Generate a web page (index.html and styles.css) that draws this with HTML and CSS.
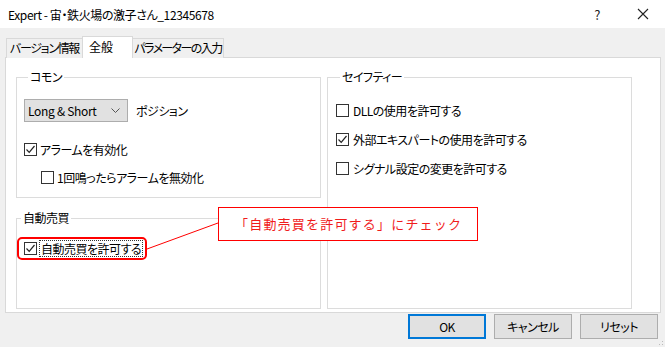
FILE: index.html
```html
<!DOCTYPE html>
<html lang="ja">
<head>
    <meta charset="UTF-8">
    <title>Expert</title>
    <link rel="stylesheet" href="styles.css">
</head>
<body>
    <div class="window">
        <!-- Title bar -->
        <div class="titlebar">
            <span class="title">Expert - 宙・鉄火場の激子さん_12345678</span>
            <span class="help">?</span>
            <svg class="close" width="12" height="12" viewBox="0 0 12 12">
                <path d="M1 1 L11 11 M11 1 L1 11" stroke="#222" stroke-width="1.1" fill="none"/>
            </svg>
        </div>

        <!-- Tabs -->
        <div class="tabs">
            <div class="tab info">バージョン情報</div>
            <div class="tab active">全般</div>
            <div class="tab params">パラメーターの入力</div>
        </div>

        <div class="panel">
            <div class="col">
                <fieldset class="group common">
                    <legend>コモン</legend>
                    <div class="select-row">
                        <div class="select">
                            <span>Long &amp; Short</span>
                            <svg width="9" height="6" viewBox="0 0 9 6"><path d="M0.5 0.5 L4.5 4.5 L8.5 0.5" stroke="#555" fill="none"/></svg>
                        </div>
                        <span>ポジション</span>
                    </div>
                    <div class="check first">
                        <span class="box"><svg width="11" height="11" viewBox="0 0 11 11"><path d="M1.5 5.5 L4.2 8.3 L9.5 2" stroke="#222" stroke-width="1.2" fill="none"/></svg></span>
                        <span>アラームを有効化</span>
                    </div>
                    <div class="check nested">
                        <span class="box"></span>
                        <span>1回鳴ったらアラームを無効化</span>
                    </div>
                </fieldset>

                <fieldset class="group auto">
                    <legend>自動売買</legend>
                    <div class="mark">
                        <span class="box"><svg width="11" height="11" viewBox="0 0 11 11"><path d="M1.5 5.5 L4.2 8.3 L9.5 2" stroke="#222" stroke-width="1.2" fill="none"/></svg></span>
                        <span class="focus">自動売買を許可する</span>
                    </div>
                </fieldset>
            </div>

            <div class="col">
                <fieldset class="group safety">
                    <legend>セイフティー</legend>
                    <div class="check">
                        <span class="box"></span>
                        <span>DLLの使用を許可する</span>
                    </div>
                    <div class="check">
                        <span class="box"><svg width="11" height="11" viewBox="0 0 11 11"><path d="M1.5 5.5 L4.2 8.3 L9.5 2" stroke="#222" stroke-width="1.2" fill="none"/></svg></span>
                        <span>外部エキスパートの使用を許可する</span>
                    </div>
                    <div class="check">
                        <span class="box"></span>
                        <span>シグナル設定の変更を許可する</span>
                    </div>
                </fieldset>
            </div>
        </div>

        <div class="buttons">
            <button class="btn default">OK</button>
            <button class="btn">キャンセル</button>
            <button class="btn">リセット</button>
            <svg class="grip" width="5" height="5" viewBox="0 0 5 5">
                <rect x="3" y="0" width="1" height="1" fill="#bbb"/>
                <rect x="0" y="3" width="1" height="1" fill="#bbb"/>
                <rect x="3" y="3" width="1" height="1" fill="#bbb"/>
            </svg>
        </div>

        <!-- Annotation -->
        <svg class="leader" width="665" height="347">
            <line x1="147" y1="249" x2="218" y2="223" stroke="#ff0000" stroke-width="1"/>
        </svg>
        <div class="callout">「自動売買を許可する」にチェック</div>
    </div>
</body>
</html>
```

FILE: styles.css
```css
/* Basic Styles */
* {
    box-sizing: border-box;
}

body {
    margin: 0;
    font-family: "Noto Sans CJK JP", "Noto Sans", sans-serif;
    font-size: 12px;
    font-feature-settings: "palt";
    letter-spacing: -0.5px;
    color: #000;
    background-color: #f0f0f0;
}

.window {
    position: relative;
    width: 665px;
    height: 347px;
    overflow: hidden;
}

/* Title bar */
.titlebar {
    height: 28px;
    background-color: #fff;
    display: flex;
    align-items: center;
    padding-left: 8px;
}

.title {
    flex: 1;
    letter-spacing: -0.4px;
}

.help {
    font-size: 13px;
    color: #222;
    margin-right: 37px;
}

.close {
    margin-right: 16px;
}

/* Tabs */
.tabs {
    display: flex;
    align-items: flex-end;
    margin-top: 8px;
    padding-left: 6px;
    margin-bottom: -1px;
    position: relative;
    z-index: 1;
}

.tab {
    height: 20px;
    line-height: 18px;
    border: 1px solid #d9d9d9;
    border-bottom: none;
    background-color: #f0f0f0;
    text-align: center;
    white-space: nowrap;
    letter-spacing: -1.3px;
}

.tab.info {
    width: 77px;
}

.tab.params {
    width: 92px;
    letter-spacing: -1.6px;
}

.tab + .tab {
    margin-left: -1px;
}

.tab.active {
    height: 22px;
    line-height: 20px;
    width: 51px;
    text-align: left;
    padding-left: 6px;
    letter-spacing: 0;
    background-color: #fff;
}

/* Panel */
.panel {
    width: 656px;
    height: 256px;
    margin-left: 5px;
    background-color: #fff;
    border: 1px solid #d9d9d9;
    display: flex;
    gap: 6px;
    padding: 11px 0 0 10px;
}

.col {
    width: 305px;
    display: flex;
    flex-direction: column;
    gap: 12px;
}

.group {
    margin: 0;
    border: 1px solid #dcdcdc;
    padding: 0;
}

.group legend {
    line-height: 16px;
    padding: 0 2px;
    margin-left: 4px;
}

.common {
    height: 129px;
    padding: 14px 7px 0 7px;
}

.auto {
    height: 99px;
    padding: 11px 0 0 0;
}

.safety {
    height: 240px;
    padding: 15px 8px 0 8px;
}

/* Select */
.select-row {
    display: flex;
    align-items: center;
    gap: 8px;
}

.select {
    width: 104px;
    height: 23px;
    background-color: #e1e1e1;
    border: 1px solid #adadad;
    display: flex;
    align-items: center;
    justify-content: space-between;
    padding: 0 7px 0 3px;
    letter-spacing: -0.3px;
}

/* Checkboxes */
.check {
    display: flex;
    align-items: center;
    gap: 3px;
    height: 20px;
    white-space: nowrap;
}

.safety .check + .check {
    margin-top: 9px;
}

.safety .check {
    gap: 4px;
}

.check.first {
    margin-top: 17px;
}

.check.nested {
    margin-top: 8px;
    margin-left: 17px;
}

.box {
    width: 13px;
    height: 13px;
    border: 1px solid #333;
    background-color: #fff;
    display: flex;
    align-items: center;
    justify-content: center;
}

/* Highlighted checkbox */
.mark {
    width: 130px;
    height: 23px;
    border: 2px solid #ff0000;
    border-radius: 5px;
    display: flex;
    align-items: center;
    gap: 2px;
    padding-left: 5px;
    white-space: nowrap;
}

.focus {
    border: 1px dotted #333;
    line-height: 15px;
    padding: 0 1px;
}

/* Buttons */
.buttons {
    display: flex;
    justify-content: flex-end;
    align-items: flex-start;
    gap: 8px;
    padding-right: 7px;
    margin-top: 1px;
    position: relative;
}

.btn {
    width: 78px;
    height: 25px;
    font-family: inherit;
    font-size: 12px;
    font-feature-settings: "palt";
    letter-spacing: -0.5px;
    background-color: #e1e1e1;
    border: 1px solid #adadad;
    color: #000;
    padding: 0;
}

.btn.default {
    border: 2px solid #0078d7;
}

.grip {
    position: absolute;
    right: 1px;
    bottom: -7px;
}

/* Annotation overlay */
.leader {
    position: absolute;
    left: 0;
    top: 0;
    pointer-events: none;
}

.callout {
    position: absolute;
    left: 218px;
    top: 207px;
    width: 260px;
    height: 34px;
    border: 1px solid #ff0000;
    background-color: #fff;
    color: #f01c1c;
    font-size: 13px;
    font-feature-settings: normal;
    letter-spacing: 1.2px;
    line-height: 32px;
    padding-left: 16px;
    white-space: nowrap;
}
```
